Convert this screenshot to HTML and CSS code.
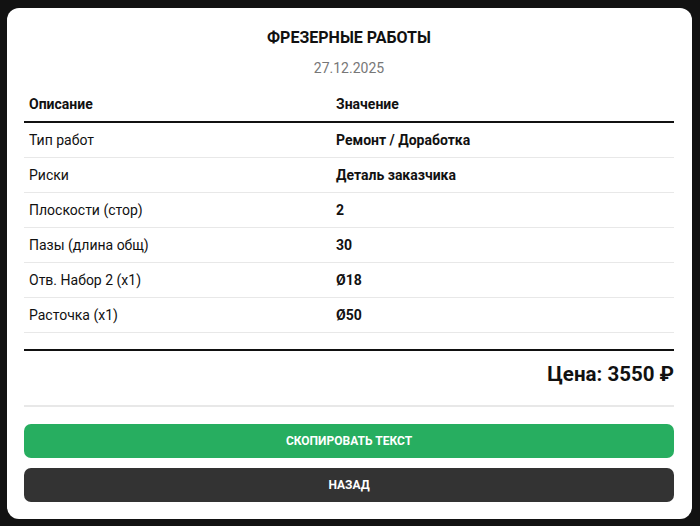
FILE: index.html
```html
<!DOCTYPE html>
<html lang="ru">
<head>
<meta charset="utf-8">
<title>Фрезерные работы</title>
<link rel="stylesheet" href="styles.css">
</head>
<body>
<div class="page">
  <div class="card">
    <h1 class="title">ФРЕЗЕРНЫЕ РАБОТЫ</h1>
    <div class="date">27.12.2025</div>
    <table class="spec">
      <thead>
        <tr><th class="col-desc">Описание</th><th>Значение</th></tr>
      </thead>
      <tbody>
        <tr><td>Тип работ</td><td class="val">Ремонт / Доработка</td></tr>
        <tr><td>Риски</td><td class="val">Деталь заказчика</td></tr>
        <tr><td>Плоскости (стор)</td><td class="val">2</td></tr>
        <tr><td>Пазы (длина общ)</td><td class="val">30</td></tr>
        <tr><td>Отв. Набор 2 (x1)</td><td class="val">Ø18</td></tr>
        <tr><td>Расточка (x1)</td><td class="val">Ø50</td></tr>
      </tbody>
    </table>
    <div class="total">Цена: 3550 ₽</div>
    <div class="actions">
      <button class="btn btn-green">Скопировать текст</button>
      <button class="btn btn-dark">Назад</button>
    </div>
  </div>
</div>
</body>
</html>
```
FILE: styles.css
```css
html, body {
  margin: 0;
  padding: 0;
  background: #121212;
  font-family: Roboto, "Noto Sans", "Liberation Sans", sans-serif;
  color: #111;
}
.page {
  padding: 8px 8px 7px 7px;
}
.card {
  background: #fff;
  border-radius: 12px;
  padding: 20px 18px 17px 17px;
  display: flex;
  flex-direction: column;
}
.title {
  margin: 0;
  font-size: 16px;
  font-weight: 700;
  text-align: center;
  line-height: 19px;
  color: #111;
}
.date {
  margin-top: 13px;
  font-size: 14px;
  line-height: 16px;
  color: #777;
  text-align: center;
}
.spec {
  margin-top: 11px;
  width: 100%;
  border-collapse: collapse;
  font-size: 14px;
}
.spec th, .spec td {
  padding: 9px 5px;
  line-height: 16px;
  text-align: left;
}
.spec th {
  font-weight: 700;
  border-bottom: 2px solid #111;
}
.spec td {
  border-bottom: 1px solid #e8e8e8;
}
.col-desc {
  width: 297px;
}
.val {
  font-weight: 700;
}
.total {
  margin-top: 16px;
  border-top: 2px solid #111;
  border-bottom: 2px solid #e8e8e8;
  padding: 10px 0 18px;
  text-align: right;
  font-size: 20.5px;
  line-height: 26px;
  font-weight: 700;
  color: #111;
}
.actions {
  margin-top: 17px;
  display: flex;
  flex-direction: column;
  gap: 10px;
}
.btn {
  height: 34px;
  border: 0;
  border-radius: 7px;
  font-family: Roboto, "Noto Sans", "Liberation Sans", sans-serif;
  font-size: 12px;
  font-weight: 700;
  text-transform: uppercase;
  color: #fff;
}
.btn-green {
  background: #27ae60;
}
.btn-dark {
  background: #333;
}
```
